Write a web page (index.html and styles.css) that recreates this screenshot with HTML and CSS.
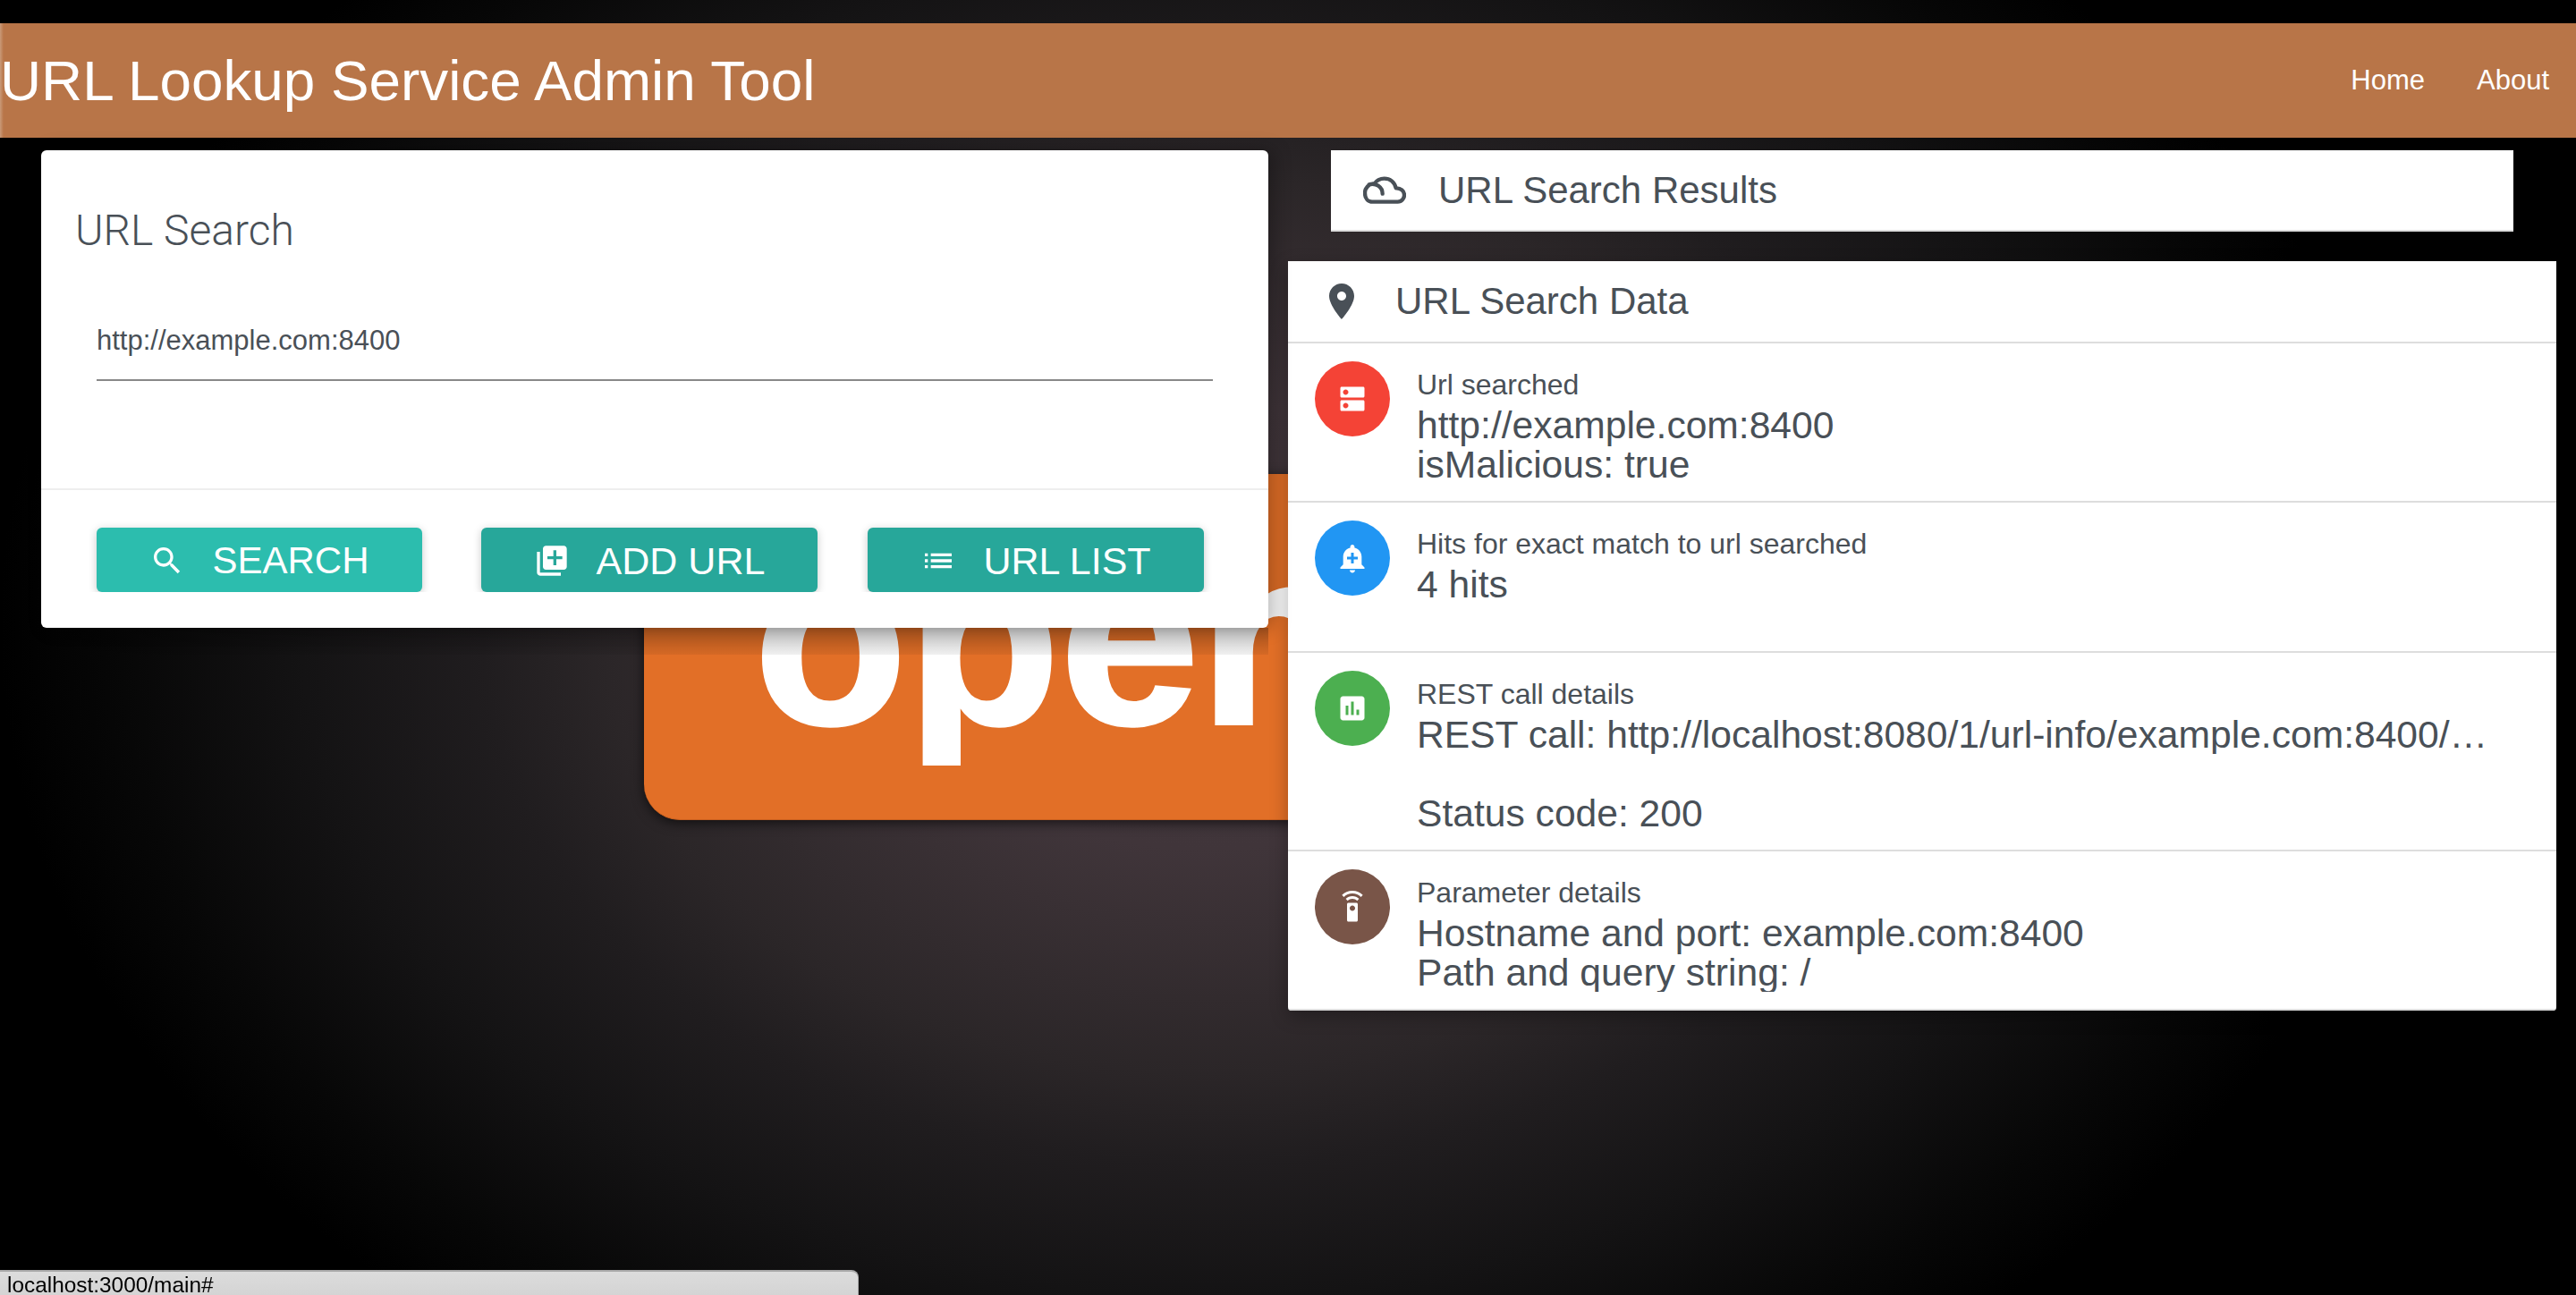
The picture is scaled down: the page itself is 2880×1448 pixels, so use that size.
FILE: index.html
```html
<!DOCTYPE html>
<html lang="en">
<head>
<meta charset="utf-8">
<title>URL Lookup Service Admin Tool</title>
<link rel="stylesheet" href="styles.css">
</head>
<body>
<header class="navbar">
  <h1 class="brand">URL Lookup Service Admin Tool</h1>
  <nav class="nav-links">
    <a class="nav-link" href="#">Home</a>
    <a class="nav-link" href="#">About</a>
  </nav>
</header>

<div class="logo" aria-hidden="true">
  <div class="logo-word">open</div>
</div>

<main class="content">
  <section class="card">
    <h2 class="card-title">URL Search</h2>
    <div class="field">http://example.com:8400</div>
    <div class="card-footer">
      <a class="btn btn-primary btn-search" href="#">
        <svg class="btn-icon" viewBox="0 0 24 24"><path d="M15.5 14h-.79l-.28-.27C15.41 12.59 16 11.11 16 9.5 16 5.91 13.09 3 9.5 3S3 5.91 3 9.5 5.91 16 9.5 16c1.61 0 3.09-.59 4.23-1.57l.27.28v.79l5 4.99L20.49 19l-4.99-5zm-6 0C7.01 14 5 11.99 5 9.5S7.01 5 9.5 5 14 7.01 14 9.5 11.99 14 9.5 14z"/></svg>
        <span>SEARCH</span>
      </a>
      <a class="btn btn-add" href="#">
        <svg class="btn-icon" viewBox="0 0 24 24"><path d="M4 6H2v14c0 1.1.9 2 2 2h14v-2H4V6zm16-4H8c-1.1 0-2 .9-2 2v12c0 1.1.9 2 2 2h12c1.1 0 2-.9 2-2V4c0-1.1-.9-2-2-2zm-1 9h-4v4h-2v-4H9V9h4V5h2v4h4v2z"/></svg>
        <span>ADD URL</span>
      </a>
      <a class="btn btn-list" href="#">
        <svg class="btn-icon" viewBox="0 0 24 24"><path d="M3 13h2v-2H3v2zm0 4h2v-2H3v2zm0-8h2V7H3v2zm4 4h14v-2H7v2zm0 4h14v-2H7v2zM7 7v2h14V7H7z"/></svg>
        <span>URL LIST</span>
      </a>
    </div>
  </section>

  <section class="results">
    <div class="results-bar">
      <svg class="head-icon head-icon-line" viewBox="42 12 144 144"><path d="M68 122H158C172 122 180 110 180 99C180 86 168 75 152 76C147 56 132 44 113 44C98 44 86 52 79 62C61 60 48 76 48 92C48 109 57 122 72 122M62 64C85 57 107 72 107 95"/></svg>
      <span>URL Search Results</span>
    </div>
    <div class="data-panel">
      <div class="data-head">
        <svg class="head-icon" viewBox="0 0 24 24"><path d="M12 2C8.13 2 5 5.13 5 9c0 5.25 7 13 7 13s7-7.75 7-13c0-3.87-3.13-7-7-7zm0 9.5c-1.38 0-2.5-1.12-2.5-2.5s1.12-2.5 2.5-2.5 2.5 1.12 2.5 2.5-1.12 2.5-2.5 2.5z"/></svg>
        <span>URL Search Data</span>
      </div>

      <div class="row">
        <div class="avatar avatar-red"><svg class="avatar-icon" viewBox="0 0 24 24"><path d="M20 13H4c-.55 0-1 .45-1 1v6c0 .55.45 1 1 1h16c.55 0 1-.45 1-1v-6c0-.55-.45-1-1-1zM7 19c-1.1 0-2-.9-2-2s.9-2 2-2 2 .9 2 2-.9 2-2 2zM20 3H4c-.55 0-1 .45-1 1v6c0 .55.45 1 1 1h16c.55 0 1-.45 1-1V4c0-.55-.45-1-1-1zM7 9c-1.1 0-2-.9-2-2s.9-2 2-2 2 .9 2 2-.9 2-2 2z"/></svg></div>
        <div class="row-text">
          <div class="row-label">Url searched</div>
          <div class="row-value">
            <div class="line">http://example.com:8400</div>
            <div class="line">isMalicious: true</div>
          </div>
        </div>
      </div>

      <div class="row">
        <div class="avatar avatar-blue"><svg class="avatar-icon" viewBox="0 0 24 24"><path d="M10.01 21.01c0 1.1.89 1.99 1.99 1.99s1.99-.89 1.99-1.99h-3.98zm8.87-4.19V11c0-3.25-2.25-5.97-5.29-6.69v-.72C13.59 2.71 12.88 2 12 2s-1.59.71-1.59 1.59v.72C7.37 5.03 5.12 7.75 5.12 11v5.82L3 18.94V20h18v-1.06l-2.12-2.12zM16 13.01h-3v3h-2v-3H8V11h3V8h2v3h3v2.01z"/></svg></div>
        <div class="row-text">
          <div class="row-label">Hits for exact match to url searched</div>
          <div class="row-value row-value-short">
            <div class="line">4 hits</div>
          </div>
        </div>
      </div>

      <div class="row">
        <div class="avatar avatar-green"><svg class="avatar-icon" viewBox="0 0 24 24"><path d="M19 3H5c-1.1 0-2 .9-2 2v14c0 1.1.9 2 2 2h14c1.1 0 2-.9 2-2V5c0-1.1-.9-2-2-2zM9 17H7v-7h2v7zm4 0h-2V7h2v10zm4 0h-2v-4h2v4z"/></svg></div>
        <div class="row-text">
          <div class="row-label">REST call details</div>
          <div class="row-value row-value-tall">
            <div class="line line-clip">REST call: http://localhost:8080/1/url-info/example.com:8400/?isMalicious=true</div>
            <div class="line">&nbsp;</div>
            <div class="line">Status code: 200</div>
          </div>
        </div>
      </div>

      <div class="row">
        <div class="avatar avatar-brown"><svg class="avatar-icon" viewBox="0 0 24 24"><path d="M15 9H9c-.55 0-1 .45-1 1v12c0 .55.45 1 1 1h6c.55 0 1-.45 1-1V10c0-.55-.45-1-1-1zm-3 6c-1.1 0-2-.9-2-2s.9-2 2-2 2 .9 2 2-.9 2-2 2zM7.05 6.05l1.41 1.41C9.37 6.56 10.62 6 12 6s2.63.56 3.54 1.46l1.41-1.41C15.68 4.78 13.93 4 12 4s-3.68.78-4.95 2.05zM12 0C8.96 0 6.21 1.23 4.22 3.22l1.41 1.41C7.26 3.01 9.51 2 12 2s4.74 1.01 6.36 2.64l1.41-1.41C17.79 1.23 15.04 0 12 0z"/></svg></div>
        <div class="row-text">
          <div class="row-label">Parameter details</div>
          <div class="row-value">
            <div class="line">Hostname and port: example.com:8400</div>
            <div class="line">Path and query string: /</div>
          </div>
        </div>
      </div>
    </div>
  </section>
</main>

<footer class="status">localhost:3000/main#</footer>
</body>
</html>
```
FILE: styles.css
```css
* { box-sizing: border-box; }

html, body { margin: 0; padding: 0; }

body {
  position: relative;
  height: 1448px;
  overflow: hidden;
  padding-top: 26px;
  font-family: "Liberation Sans", Arial, sans-serif;
  color: #495057;
  background-color: #000;
  background-image: radial-gradient(ellipse 1350px 1000px at 1350px 700px, #453a3f 0%, #40353a 25%, #2b2628 50%, #201d1f 60%, #141314 75%, #070707 90%, #000 100%);
}

.navbar {
  height: 128px;
  display: flex;
  align-items: center;
  justify-content: space-between;
  padding: 0 30px 0 0;
  background: linear-gradient(90deg, #c99a79 0, #b87548 4px);
}

.brand {
  margin: 0;
  font-size: 63.8px;
  font-weight: 400;
  color: #fff;
  white-space: nowrap;
}

.nav-links { display: flex; gap: 58px; }

.nav-link {
  font-size: 31px;
  color: #fff;
  text-decoration: none;
}

.logo {
  position: absolute;
  left: 720px;
  top: 530px;
  width: 900px;
  height: 387px;
  border-radius: 40px;
  background: #e26f27;
  border-bottom: 1px solid #c9601f;
  box-shadow: 0 3px 14px rgba(0, 0, 0, .65);
}

.logo-word {
  height: 326px;
  overflow: hidden;
  padding: 42px 0 0 123px;
  font-size: 280px;
  font-weight: 700;
  line-height: 280px;
  color: #fff;
  -webkit-text-stroke: 4px #fff;
}

.content {
  position: relative;
  display: flex;
  align-items: flex-start;
  gap: 22px;
  margin: 14px 0 0 46px;
}

.card {
  position: relative;
  width: 1372px;
  height: 534px;
  padding-top: 62px;
  background: #fff;
  border-radius: 6px;
  box-shadow: 6px 0 20px rgba(0, 0, 0, .28);
}

.card::after {
  content: "";
  position: absolute;
  left: 0;
  right: 0;
  top: 100%;
  height: 30px;
  background: linear-gradient(180deg, rgba(0, 0, 0, .26), rgba(0, 0, 0, .06));
}

.card-title {
  margin: 0 0 0 38px;
  font-family: Roboto, sans-serif;
  font-size: 48px;
  font-weight: 300;
  line-height: 56px;
}

.field {
  margin: 77px 62px 0;
  height: 63px;
  font-size: 31px;
  line-height: 36px;
  border-bottom: 2px solid #888;
}

.card-footer {
  display: flex;
  height: 116px;
  overflow: hidden;
  margin-top: 120px;
  padding: 42px 0 0 62px;
  border-top: 2px solid #eee;
}

.btn {
  display: flex;
  align-items: center;
  justify-content: center;
  gap: 30px;
  width: 376px;
  height: 72px;
  padding-top: 2px;
  border-radius: 6px;
  font-size: 43px;
  color: #fff;
  text-decoration: none;
  background: #27a79a;
  box-shadow: 0 2px 10px rgba(0, 0, 0, .22);
}

.btn-primary { background: #2cbdae; }
.btn-search { width: 364px; font-size: 42px; }
.btn-add { margin-left: 66px; }
.btn-list { margin-left: 56px; }

.btn-icon { width: 40px; height: 40px; fill: #fff; flex: none; }

.results { width: 1418px; flex: none; }

.results-bar {
  display: flex;
  align-items: center;
  gap: 36px;
  height: 91px;
  margin: 0 48px 33px;
  padding-left: 36px;
  font-size: 42px;
  background: #fff;
  border-bottom: 2px solid #ddd;
}

.data-panel {
  background: #fff;
  border-radius: 0 0 4px 4px;
  overflow: hidden;
  box-shadow: 0 6px 20px rgba(0, 0, 0, .3);
}

.data-head {
  display: flex;
  align-items: center;
  gap: 36px;
  height: 92px;
  padding-left: 36px;
  font-size: 42px;
  border-bottom: 2px solid #ddd;
}

.head-icon { width: 48px; height: 48px; fill: #495057; flex: none; }

.head-icon-line {
  fill: none;
  stroke: #495057;
  stroke-width: 13;
  stroke-linecap: round;
  stroke-linejoin: round;
}

.row {
  display: flex;
  gap: 30px;
  padding: 20px 66px 19px 30px;
  border-bottom: 2px solid #ddd;
}

.avatar {
  flex: none;
  width: 84px;
  height: 84px;
  border-radius: 50%;
  display: flex;
  align-items: center;
  justify-content: center;
}

.avatar-red { background: #f44336; }
.avatar-blue { background: #2196f3; }
.avatar-green { background: #4caf50; }
.avatar-brown { background: #795548; }

.avatar-icon { width: 36px; height: 36px; fill: #fff; }

.row-text { flex: 1; min-width: 0; padding-top: 4px; }

.row-label {
  font-size: 32px;
  line-height: 45px;
  white-space: nowrap;
}

.row-value {
  height: 88px;
  overflow: hidden;
  font-size: 42.6px;
  line-height: 44px;
}

.row-value-short { height: 78px; }
.row-value-tall { height: 132px; }

.line { white-space: nowrap; }

.line-clip {
  overflow: hidden;
  text-overflow: ellipsis;
}

.status {
  position: fixed;
  left: 0;
  bottom: 0;
  width: 960px;
  height: 28px;
  padding-left: 8px;
  overflow: hidden;
  font-size: 24.4px;
  line-height: 30px;
  color: #000;
  background: linear-gradient(180deg, #dcdcdc, #d4d4d4);
  border-top: 2px solid #a9a9a9;
  border-right: 1px solid #a9a9a9;
  border-radius: 0 8px 0 0;
}
```
